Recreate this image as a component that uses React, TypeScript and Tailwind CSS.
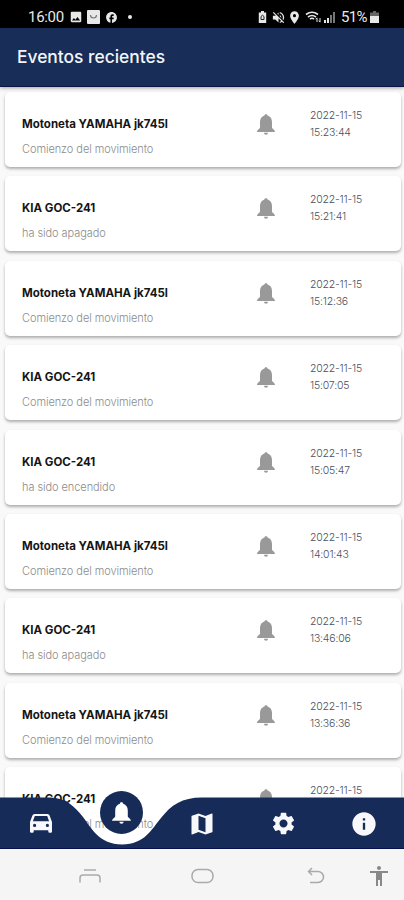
import React from 'react';
import {
  MdMap,
  MdSettings,
  MdInfo,
  MdVolumeOff,
  MdLocationOn,
  MdImage,
  MdFacebook,
  MdAccessibility,
} from 'react-icons/md';

interface VehicleEvent {
  id: number;
  vehicle: string;
  message: string;
  date: string;
  time: string;
}

const MOTONETA = 'Motoneta YAMAHA jk745l';
const KIA = 'KIA GOC-241';

const events: VehicleEvent[] = [
  { id: 1, vehicle: MOTONETA, message: 'Comienzo del movimiento', date: '2022-11-15', time: '15:23:44' },
  { id: 2, vehicle: KIA, message: 'ha sido apagado', date: '2022-11-15', time: '15:21:41' },
  { id: 3, vehicle: MOTONETA, message: 'Comienzo del movimiento', date: '2022-11-15', time: '15:12:36' },
  { id: 4, vehicle: KIA, message: 'Comienzo del movimiento', date: '2022-11-15', time: '15:07:05' },
  { id: 5, vehicle: KIA, message: 'ha sido encendido', date: '2022-11-15', time: '15:05:47' },
  { id: 6, vehicle: MOTONETA, message: 'Comienzo del movimiento', date: '2022-11-15', time: '14:01:43' },
  { id: 7, vehicle: KIA, message: 'ha sido apagado', date: '2022-11-15', time: '13:46:06' },
  { id: 8, vehicle: MOTONETA, message: 'Comienzo del movimiento', date: '2022-11-15', time: '13:36:36' },
  { id: 9, vehicle: KIA, message: 'Comienzo del movimiento', date: '2022-11-15', time: '13:32:10' },
];

const BellIcon: React.FC<{ className?: string }> = ({ className }) => (
  <svg className={className} viewBox="0 0 18 21" fill="currentColor">
    <path d="M9 .3c.9 0 1.400.5 1.600 1.300C13.400 2.500 15 4.800 15 8v5.500c0 1.200 3 2.200 3 4.500H0c0-2.300 3-3.300 3-4.500V8c0-3.200 1.600-5.500 4.400-6.400C7.600.8 8.100.3 9 .3Z" />
    <path d="M7 18.800h4c0 1.200-.8 1.900-2 1.900s-2-.7-2-1.900Z" />
  </svg>
);

const CarIcon: React.FC<{ className?: string }> = ({ className }) => (
  <svg className={className} viewBox="0 0 22 19" fill="currentColor">
    <path
      fillRule="evenodd"
      d="M4.500 0h13q1.600 0 2.100 1.500L22 8v9.500q0 1.300-1.200 1.300h-1.300q-1.200 0-1.200-1.300v-1.300H3.700v1.300q0 1.300-1.200 1.300H1.200Q0 18.800 0 17.500V8l2.400-6.500Q2.900 0 4.500 0ZM4.800 2 2.900 7.200h16.200L17.200 2ZM4.600 9.800a1.600 1.600 0 1 0 0 3.200 1.600 1.600 0 0 0 0-3.200Zm12.800 0a1.600 1.600 0 1 0 0 3.200 1.600 1.600 0 0 0 0-3.200Z"
    />
  </svg>
);

const StatusBar: React.FC = () => (
  <div className="flex h-[28px] shrink-0 items-center bg-black pl-[28px] pr-[25px] pt-[6px] text-[#e8e8e8]">
    <span className="w-[36px] whitespace-nowrap font-[Roboto] text-[15px] leading-none tracking-[-0.3px]">16:00</span>
    <MdImage className="ml-[5px] size-[14px]" />
    <svg className="ml-[4px] h-[14px] w-[13px]" viewBox="0 0 13 14">
      <rect width="13" height="14" rx="1" fill="#e8e8e8" />
      <path d="M3.5 5c0 4 6 4 6 0" fill="none" stroke="#777" strokeWidth="1.2" />
    </svg>
    <MdFacebook className="ml-[5px] size-[13px]" />
    <span className="ml-[10px] size-[4px] rounded-full bg-[#e8e8e8]" />
    <div className="ml-auto flex items-center">
      <svg className="h-[12px] w-[9px]" viewBox="0 0 9 12">
        <path d="M3 0h3v1.5h2.2v10.5H.8V1.5H3z" fill="#e8e8e8" />
        <path d="M3 8.5V5.5l1.5-1.3L6 5.5v3z" fill="none" stroke="#222" strokeWidth="1" />
      </svg>
      <MdVolumeOff className="ml-[4px] size-[15px]" />
      <MdLocationOn className="ml-px size-[15px]" />
      <svg className="ml-[3px] h-[12px] w-[17px]" viewBox="0 0 17 12" fill="none" stroke="#e8e8e8">
        <path d="M1 3.5Q7 -1 13 3.5M3 6q4-3 8 0M5 8q2-1.5 4 0" strokeWidth="1.6" />
        <path d="M12 11V7m-1.3 1.2L12 6.8M15 7v4m-1.3-1.3L15 11.2" strokeWidth="1" />
      </svg>
      <svg className="ml-[2px] h-[12px] w-[11px]" viewBox="0 0 11 12">
        <path d="M0 9h2v3H0zM3 7h2v5H3z" fill="#e8e8e8" />
        <path d="M6 4h2v8H6zM9 1h2v11H9z" fill="#777" />
      </svg>
      <span className="ml-[6px] w-[28px] whitespace-nowrap font-[Roboto] text-[15px] leading-none tracking-[-0.7px]">51%</span>
      <svg className="ml-px h-[12px] w-[9px]" viewBox="0 0 9 12">
        <path d="M3 0h3v1.5h3V5H0V1.5h3z" fill="#666" />
        <path d="M0 5h9v7H0z" fill="#e8e8e8" />
      </svg>
    </div>
  </div>
);

const EventCard: React.FC<{ event: VehicleEvent }> = ({ event }) => (
  <li className="flex h-[75px] shrink-0 rounded-[5px] bg-white pl-[17px] shadow-[0_2px_3px_rgba(0,0,0,0.3)] last:h-[90px]">
    <div className="w-[235px] whitespace-nowrap pt-[24px]">
      <h2 className="text-[11.5px] font-bold leading-[16px] text-[#151515]">{event.vehicle}</h2>
      <p className="mt-[9px] text-[11px] font-light leading-[16px] tracking-[-0.07px] text-[#8c8c8c]">{event.message}</p>
    </div>
    <BellIcon className="mt-[22px] h-[21px] w-[18px] text-[#999]" />
    <div className="ml-[35px] whitespace-nowrap pt-[15px] text-[10.5px] font-light leading-[17px] tracking-[-0.2px] text-[#4b5060]">
      <div>{event.date}</div>
      <div>{event.time}</div>
    </div>
  </li>
);

const TabBar: React.FC = () => (
  <nav className="absolute inset-x-0 bottom-0 h-[52px]">
    <svg className="absolute inset-0" width="404" height="52" viewBox="0 0 404 52">
      <path d="M0 .5H50C66 .5 75 10 83 20C92 32 99 47 122 47.5C145 47 151 33 161 21C171 8 182 .5 202 .5H404V52H0Z" fill="#162b57" />
      <path d="M0 51.5H404" stroke="#06104a" />
    </svg>
    <div className="absolute left-[100px] top-[-6px] flex size-[43px] items-center justify-center rounded-full bg-[#162b57] text-white">
      <BellIcon className="h-[22px] w-[19px]" />
    </div>
    <div className="relative grid h-full grid-cols-5 place-items-center pl-px pt-px text-[#f8f8fa]">
      <CarIcon className="h-[19px] w-[22px]" />
      <span />
      <MdMap className="size-[28px]" />
      <MdSettings className="size-[27px]" />
      <MdInfo className="size-[28px]" />
    </div>
  </nav>
);

const SystemBar: React.FC = () => (
  <div className="flex h-[51px] shrink-0 items-center bg-[#f5f5f5] pl-[79px] pr-[13px] pt-[3px] text-[#aaa]">
    <svg width="22" height="16" viewBox="0 0 22 16" fill="none" stroke="currentColor" strokeWidth="1.5">
      <path d="M5 2h12M1 14.5V10q0-3 3-3h14q3 0 3 3v4.5" />
    </svg>
    <svg className="ml-[90px]" width="23" height="16" viewBox="0 0 23 16" fill="none" stroke="currentColor" strokeWidth="1.5">
      <rect x="1" y="1.5" width="21" height="13" rx="6" />
    </svg>
    <svg className="ml-[93px]" width="18" height="18" viewBox="0 0 18 18" fill="none" stroke="currentColor" strokeWidth="1.5">
      <path d="M5 1 1.500 4.500 5 8M1.500 4.500H11a5.500 5.500 0 0 1 0 11H3" />
    </svg>
    <MdAccessibility className="ml-auto size-[24px] text-[#888]" />
  </div>
);

const App: React.FC = () => {
  return (
    <div className="flex h-[900px] w-[404px] flex-col overflow-hidden bg-[#f9f9f9] font-[Inter,sans-serif]">
      <StatusBar />
      <header className="z-10 flex h-[59px] shrink-0 items-center border-b border-[#0b1548] bg-[#182d57] pl-[17px] pt-px shadow-[0_1px_4px_rgba(0,0,0,0.35)]">
        <h1 className="text-[17.4px] font-medium text-[#f4f5f8]">Eventos recientes</h1>
      </header>
      <main className="relative h-[762px] shrink-0 overflow-hidden">
        <ul className="flex flex-col gap-[9.4px] pl-[5px] pr-[3px] pt-[5px]">
          {events.map(event => (
            <EventCard key={event.id} event={event} />
          ))}
        </ul>
        <TabBar />
      </main>
      <SystemBar />
    </div>
  );
};

export default App;
